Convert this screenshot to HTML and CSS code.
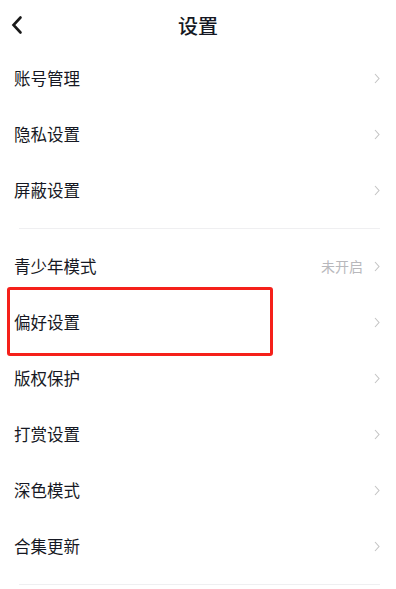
FILE: index.html
```html
<!DOCTYPE html>
<html lang="zh-CN">
<head>
<meta charset="utf-8">
<title>设置</title>
<link rel="stylesheet" href="styles.css">
</head>
<body>
<div class="page">
  <header class="header">
    <svg class="back" width="14" height="20" viewBox="0 0 14 20"><polyline points="10.5,2.5 3.5,10 10.5,17.5" fill="none" stroke="#1a1a1a" stroke-width="2.6" stroke-linejoin="miter" stroke-linecap="round"/></svg>
    <div class="title">设置</div>
  </header>
  <section class="group">
    <div class="row"><span class="label">账号管理</span><span class="right"><svg class="chev" viewBox="0 0 6 11"><polyline points="1,1 5,5.5 1,10" fill="none" stroke="#c4c4c4" stroke-width="1.1"/></svg></span></div>
    <div class="row"><span class="label">隐私设置</span><span class="right"><svg class="chev" viewBox="0 0 6 11"><polyline points="1,1 5,5.5 1,10" fill="none" stroke="#c4c4c4" stroke-width="1.1"/></svg></span></div>
    <div class="row"><span class="label">屏蔽设置</span><span class="right"><svg class="chev" viewBox="0 0 6 11"><polyline points="1,1 5,5.5 1,10" fill="none" stroke="#c4c4c4" stroke-width="1.1"/></svg></span></div>
  </section>
  <div class="divider"></div>
  <section class="group">
    <div class="row"><span class="label">青少年模式</span><span class="right"><span class="value">未开启</span><svg class="chev" viewBox="0 0 6 11"><polyline points="1,1 5,5.5 1,10" fill="none" stroke="#c4c4c4" stroke-width="1.1"/></svg></span></div>
    <div class="row highlighted"><span class="label">偏好设置</span><span class="right"><svg class="chev" viewBox="0 0 6 11"><polyline points="1,1 5,5.5 1,10" fill="none" stroke="#c4c4c4" stroke-width="1.1"/></svg></span><span class="mark"></span></div>
    <div class="row"><span class="label">版权保护</span><span class="right"><svg class="chev" viewBox="0 0 6 11"><polyline points="1,1 5,5.5 1,10" fill="none" stroke="#c4c4c4" stroke-width="1.1"/></svg></span></div>
    <div class="row"><span class="label">打赏设置</span><span class="right"><svg class="chev" viewBox="0 0 6 11"><polyline points="1,1 5,5.5 1,10" fill="none" stroke="#c4c4c4" stroke-width="1.1"/></svg></span></div>
    <div class="row"><span class="label">深色模式</span><span class="right"><svg class="chev" viewBox="0 0 6 11"><polyline points="1,1 5,5.5 1,10" fill="none" stroke="#c4c4c4" stroke-width="1.1"/></svg></span></div>
    <div class="row"><span class="label">合集更新</span><span class="right"><svg class="chev" viewBox="0 0 6 11"><polyline points="1,1 5,5.5 1,10" fill="none" stroke="#c4c4c4" stroke-width="1.1"/></svg></span></div>
  </section>
  <div class="divider"></div>
</div>
</body>
</html>
```
FILE: styles.css
```css
html, body {
  margin: 0;
  padding: 0;
  background: #ffffff;
}
body {
  font-family: "Noto Sans CJK SC", "Noto Sans", sans-serif;
  color: #161823;
}
.page {
  width: 396px;
  height: 589px;
  overflow: hidden;
}
.header {
  height: 50px;
  display: flex;
  align-items: center;
  justify-content: center;
  position: relative;
}
.back {
  position: absolute;
  left: 10px;
  top: 15px;
}
.title {
  font-size: 20px;
  font-weight: 500;
  line-height: 26px;
  margin-top: 2px;
  color: #161823;
}
.group {
  display: flex;
  flex-direction: column;
}
.row {
  height: 56px;
  display: flex;
  align-items: center;
  justify-content: space-between;
  padding: 0 16px 0 14px;
  position: relative;
}
.label {
  font-size: 16.5px;
  line-height: 20px;
  color: #161823;
}
.right {
  display: flex;
  align-items: center;
  gap: 11px;
}
.value {
  font-size: 14px;
  color: #b8b8bc;
  line-height: 18px;
}
.chev {
  width: 6px;
  height: 11px;
  display: block;
}
.divider {
  height: 1px;
  background: #efeff1;
  margin: 10px 16px 9px 19px;
}
.mark {
  position: absolute;
  left: 7px;
  top: -7px;
  width: 260px;
  height: 63px;
  border: 3px solid #f5201a;
  border-radius: 3px;
  pointer-events: none;
}
```
